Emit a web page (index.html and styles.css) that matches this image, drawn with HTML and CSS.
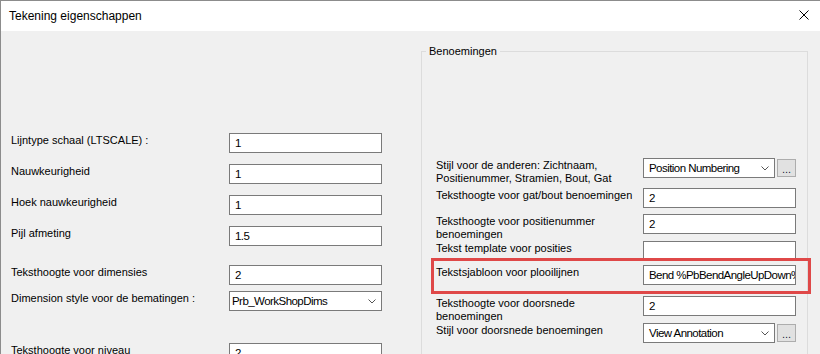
FILE: index.html
```html
<!DOCTYPE html>
<html lang="nl">
<head>
    <meta charset="UTF-8">
    <meta name="viewport" content="width=device-width, initial-scale=1.0">
    <title>Tekening eigenschappen</title>
    <link rel="stylesheet" href="styles.css">
</head>
<body>
    <div class="window">
        <div class="titlebar">
            <span class="title">Tekening eigenschappen</span>
            <svg class="close" width="10" height="10" viewBox="0 0 10 10">
                <path d="M0.5 0.5 L9.5 9.5 M9.5 0.5 L0.5 9.5" stroke="#000" stroke-width="1" fill="none"/>
            </svg>
        </div>

        <div class="content">
            <!-- algemene instellingen -->
            <div class="general">
                <div class="row">
                    <div class="label">Lijntype schaal (LTSCALE) :</div>
                    <div class="field">1</div>
                </div>
                <div class="row mt-11">
                    <div class="label">Nauwkeurigheid</div>
                    <div class="field">1</div>
                </div>
                <div class="row mt-11">
                    <div class="label">Hoek nauwkeurigheid</div>
                    <div class="field">1</div>
                </div>
                <div class="row mt-11">
                    <div class="label">Pijl afmeting</div>
                    <div class="field">1.5</div>
                </div>
                <div class="row mt-19">
                    <div class="label">Teksthoogte voor dimensies</div>
                    <div class="field">2</div>
                </div>
                <div class="row mt-6">
                    <div class="label">Dimension style voor de bematingen :</div>
                    <div class="field select plain">
                        <span>Prb_WorkShopDims</span>
                        <svg class="chevron" width="8" height="5" viewBox="0 0 8 5"><path d="M0.5 0.5 L4 4 L7.5 0.5" stroke="#555" fill="none"/></svg>
                    </div>
                </div>
                <div class="row mt-32">
                    <div class="label">Teksthoogte voor niveau</div>
                    <div class="field">2</div>
                </div>
            </div>

            <!-- benoemingen -->
            <fieldset class="group">
                <legend>Benoemingen</legend>
                <div class="group-rows">
                    <div class="row">
                        <div class="label">Stijl voor de anderen: Zichtnaam,<br>Positienummer, Stramien, Bout, Gat</div>
                        <div class="combo">
                            <div class="field select">
                                <span>Position Numbering</span>
                                <svg class="chevron" width="8" height="5" viewBox="0 0 8 5"><path d="M0.5 0.5 L4 4 L7.5 0.5" stroke="#555" fill="none"/></svg>
                            </div>
                            <div class="more">...</div>
                        </div>
                    </div>
                    <div class="row mt-3">
                        <div class="label">Teksthoogte voor gat/bout benoemingen</div>
                        <div class="field">2</div>
                    </div>
                    <div class="row mt-6">
                        <div class="label">Teksthoogte voor positienummer<br>benoemingen</div>
                        <div class="field">2</div>
                    </div>
                    <div class="row">
                        <div class="label">Tekst template voor posities</div>
                        <div class="field"></div>
                    </div>
                    <div class="row mt-4 marked">
                        <div class="label">Tekstsjabloon voor plooilijnen</div>
                        <div class="field">Bend %PbBendAngleUpDown%</div>
                    </div>
                    <div class="row mt-11">
                        <div class="label">Teksthoogte voor doorsnede<br>benoemingen</div>
                        <div class="field">2</div>
                    </div>
                    <div class="row">
                        <div class="label">Stijl voor doorsnede benoemingen</div>
                        <div class="combo">
                            <div class="field select">
                                <span>View Annotation</span>
                                <svg class="chevron" width="8" height="5" viewBox="0 0 8 5"><path d="M0.5 0.5 L4 4 L7.5 0.5" stroke="#555" fill="none"/></svg>
                            </div>
                            <div class="more">...</div>
                        </div>
                    </div>
                </div>
            </fieldset>
        </div>
    </div>
</body>
</html>
```

FILE: styles.css
```css
html, body {
    margin: 0;
    padding: 0;
    height: 354px;
    overflow: hidden;
}

body {
    font-family: "Liberation Sans", Arial, sans-serif;
    font-size: 11px;
    color: #000;
    background-color: #f0f0f0;
}

.window {
    height: 354px;
    border-top: 1px solid #8c8c8c;
    border-left: 1px solid #8c8c8c;
    box-sizing: border-box;
    display: flex;
    flex-direction: column;
}

.titlebar {
    height: 30px;
    background-color: #fff;
    display: flex;
    justify-content: space-between;
    padding: 0 11px 0 8px;
    flex-shrink: 0;
}

.title {
    font-size: 12px;
    line-height: 30px;
}

.close {
    margin-top: 9px;
}

.content {
    flex: 1;
    display: flex;
    background-color: #f0f0f0;
}

.general {
    width: 420px;
    box-sizing: border-box;
    padding: 102px 0 0 10px;
}

.row {
    display: flex;
    align-items: flex-start;
}

.label {
    line-height: 13px;
    padding-top: 1px;
    white-space: nowrap;
}

.general .label {
    width: 218px;
}

.group-rows .label {
    width: 207px;
}

.field {
    width: 153px;
    height: 20px;
    box-sizing: border-box;
    border: 1px solid #7a7a7a;
    background-color: #fff;
    padding: 0 5px;
    font-size: 11.5px;
    line-height: 18px;
    letter-spacing: -0.55px;
    white-space: nowrap;
    overflow: hidden;
    flex-shrink: 0;
}

.select {
    display: flex;
    justify-content: space-between;
    align-items: center;
}

.select.plain {
    padding-left: 2px;
}

.chevron {
    flex-shrink: 0;
}

.combo {
    display: flex;
    gap: 2px;
}

.combo .field {
    width: 132px;
}

.more {
    width: 19px;
    height: 18px;
    margin-top: 1px;
    box-sizing: border-box;
    border: 1px solid #adadad;
    background-color: #e1e1e1;
    text-align: center;
    line-height: 18px;
    color: #1a1a40;
}

.group {
    width: 387px;
    height: 400px;
    box-sizing: border-box;
    margin: 13px 0 0 0;
    padding: 0 0 0 4px;
    border: 1px solid #dcdcdc;
    min-width: 0;
}

.group legend {
    padding: 0 3px;
    line-height: 14px;
}

.group-rows {
    padding: 100px 0 0 10px;
}

/* rode markering rond de plooilijnen regel */
.marked {
    position: relative;
}

.marked::after {
    content: "";
    position: absolute;
    top: -7px;
    left: -5px;
    right: -4px;
    bottom: -9px;
    border: 3px solid #df4848;
}

.mt-3 { margin-top: 3px; }
.mt-4 { margin-top: 4px; }
.mt-6 { margin-top: 6px; }
.mt-11 { margin-top: 11px; }
.mt-19 { margin-top: 19px; }
.mt-32 { margin-top: 32px; }
```
